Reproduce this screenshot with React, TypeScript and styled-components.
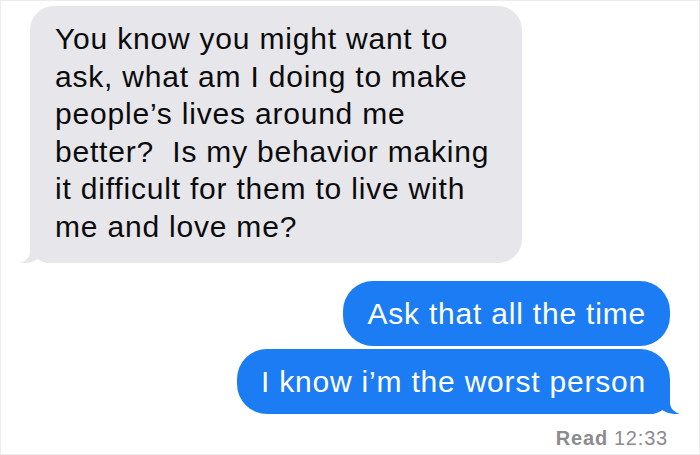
import styled, { createGlobalStyle } from "styled-components";

const GlobalStyle = createGlobalStyle`
    html, body {
        margin: 0;
        padding: 0;
        background: #ffffff;
    }
`;

const Frame = styled.div`
    width: 700px;
    height: 455px;
    box-sizing: border-box;
    border: 1px solid #ececec;
    padding-top: 5px;
    display: flex;
    flex-direction: column;
    font-family: "Liberation Sans", Arial, sans-serif;
    overflow: hidden;
`;

const Row = styled.div<{ $mine?: boolean; $gap?: number }>`
    display: flex;
    justify-content: ${(p) => (p.$mine ? "flex-end" : "flex-start")};
    padding: ${(p) => (p.$mine ? "0 29px 0 0" : "0 0 0 29px")};
    margin-top: ${(p) => p.$gap ?? 0}px;
`;

const Bubble = styled.div<{ $mine?: boolean; $tail?: boolean }>`
    position: relative;
    box-sizing: border-box;
    font-size: 30px;
    letter-spacing: 0.8px;
    white-space: pre;
    color: ${(p) => (p.$mine ? "#ffffff" : "#0b0b0b")};
    background: ${(p) => (p.$mine ? "#1c7cf4" : "#e6e6eb")};
    border-radius: ${(p) => (p.$mine ? "30px" : "24px")};
    line-height: ${(p) => (p.$mine ? "37px" : "37.6px")};
    padding: ${(p) => (p.$mine ? "14px 24px" : "14px 24px 17px 25px")};
    ${(p) => (!p.$mine ? "width: 492px;" : "")}
    ${(p) =>
        p.$tail && p.$mine ? "border-bottom-right-radius: 20px;" : ""}
    ${(p) =>
        p.$tail && !p.$mine ? "border-bottom-left-radius: 20px;" : ""}
`;

const Tail = styled.svg<{ $mine?: boolean }>`
    position: absolute;
    bottom: 0;
    width: 34px;
    height: 30px;
    ${(p) =>
        p.$mine
            ? "right: -10px; transform: scaleX(-1);"
            : "left: -10px;"}
`;

const Receipt = styled.div`
    display: flex;
    justify-content: flex-end;
    padding-right: 31px;
    margin-top: 12px;
    font-size: 20px;
    line-height: 24px;
    letter-spacing: 0.8px;
    color: #8b8b90;
    b {
        font-weight: 700;
        margin-right: 6px;
    }
`;

function BubbleTail({ mine, color }: { mine?: boolean; color: string }) {
    return (
        <Tail $mine={mine} viewBox="0 0 34 30">
            <path
                d="M10 2 L10 18 C10 24.5 6 28 0 30 C7 30.6 13 29 18 26 C22 28.5 26 30 34 30 L34 2 Z"
                fill={color}
            />
        </Tail>
    );
}

export default function App() {
    const question = [
        "You know you might want to",
        "ask, what am I doing to make",
        "people’s lives around me",
        "better?  Is my behavior making",
        "it difficult for them to live with",
        "me and love me?",
    ];
    return (
        <>
            <GlobalStyle />
            <Frame>
                <Row>
                    <Bubble $tail>
                        {question.join("\n")}
                        <BubbleTail color="#e6e6eb" />
                    </Bubble>
                </Row>
                <Row $mine $gap={18}>
                    <Bubble $mine>Ask that all the time</Bubble>
                </Row>
                <Row $mine $gap={3}>
                    <Bubble $mine $tail>
                        I know i’m the worst person
                        <BubbleTail mine color="#1c7cf4" />
                    </Bubble>
                </Row>
                <Receipt>
                    <b>Read</b>12:33
                </Receipt>
            </Frame>
        </>
    );
}
